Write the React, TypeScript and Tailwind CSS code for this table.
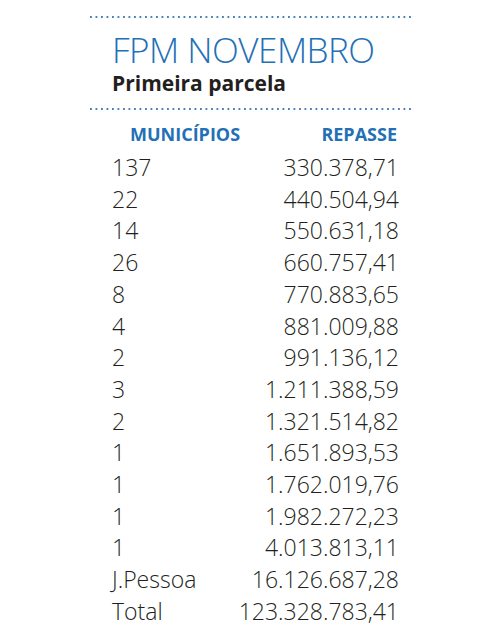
const rows: [string, string][] = [
  ['137', '330.378,71'],
  ['22', '440.504,94'],
  ['14', '550.631,18'],
  ['26', '660.757,41'],
  ['8', '770.883,65'],
  ['4', '881.009,88'],
  ['2', '991.136,12'],
  ['3', '1.211.388,59'],
  ['2', '1.321.514,82'],
  ['1', '1.651.893,53'],
  ['1', '1.762.019,76'],
  ['1', '1.982.272,23'],
  ['1', '4.013.813,11'],
  ['J.Pessoa', '16.126.687,28'],
  ['Total', '123.328.783,41'],
]

const Dots = () => (
  <div className="h-[2px] w-full bg-[linear-gradient(to_right,#4a7fb8_2px,transparent_2px)] bg-[length:5.5px_2px]" />
)

export default function App() {
  return (
    <div
      className="w-[500px] h-[639px] bg-white overflow-hidden"
      style={{ fontFamily: '"Source Sans Pro", "Open Sans", "Noto Sans", sans-serif' }}
    >
      <div className="ml-[90px] w-[322px] pt-[16px]">
        <Dots />
        <div className="pl-[22px] pt-[13px] pb-[12px]">
          <h1 className="text-[35px] leading-[38px] font-light text-[#2470b6] tracking-[-0.5px]">FPM NOVEMBRO</h1>
          <h2 className="text-[21px] leading-[26px] font-bold text-[#231f20] mt-[1px]">Primeira parcela</h2>
        </div>
        <Dots />
        <div className="pl-[22px] pr-[15px] pt-[11px]">
          <div className="flex justify-between text-[18px] leading-[26px] font-bold text-[#2470b6] pl-[18px]">
            <span>MUNICÍPIOS</span>
            <span>REPASSE</span>
          </div>
          <div className="mt-[5px] -mr-[2px]">
            {rows.map(([m, v], i) => (
              <div key={i} className="flex justify-between text-[23px] leading-[31.7px] text-[#231f20] font-light">
                <span>{m}</span>
                <span>{v}</span>
              </div>
            ))}
          </div>
        </div>
      </div>
    </div>
  )
}
